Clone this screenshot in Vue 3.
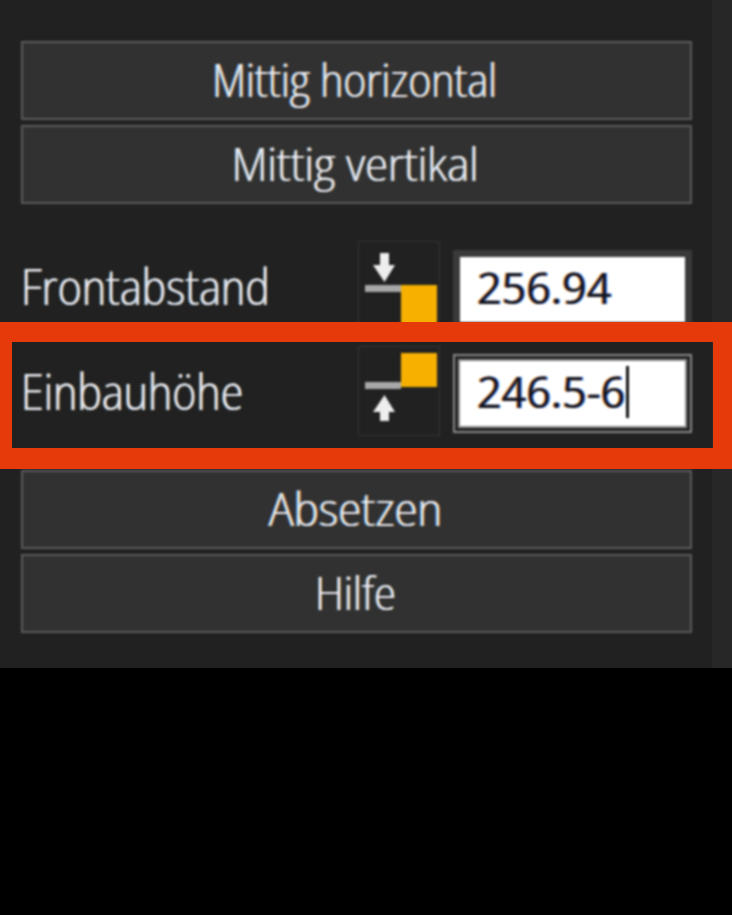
<script setup>
const topButtons = [
  { text: 'Mittig horizontal', scale: 0.85 },
  { text: 'Mittig vertikal', scale: 0.9 },
]
const bottomButtons = [
  { text: 'Absetzen', scale: 0.91 },
  { text: 'Hilfe', scale: 0.87 },
]
</script>

<template>
  <div class="page">
    <div class="panel">
      <div class="group">
        <div v-for="b in topButtons" :key="b.text" class="btn"><span class="btn-text" :style="{ transform: `scaleX(${b.scale})` }">{{ b.text }}</span></div>
      </div>
      <div class="rows">
        <div class="row">
          <div class="label"><span class="label-text">Frontabstand</span></div>
          <div class="iconbox">
            <svg width="80" height="88" viewBox="1 1 80 88">
              <path d="M22 12h9v12h6L26.500 41 15 24h7z" fill="#eee" />
              <rect x="7" y="44" width="36" height="7" fill="#a8a8a8" />
              <rect x="43" y="44" width="36" height="46" fill="#f6b000" />
            </svg>
          </div>
          <div class="field">
            <div class="value">256.94</div>
          </div>
        </div>
        <div class="row">
          <div class="label"><span class="label-text">Einbauhöhe</span></div>
          <div class="iconbox">
            <svg width="80" height="88" viewBox="1 1 80 88">
              <rect x="43" y="7" width="36" height="34" fill="#f6b000" />
              <rect x="7" y="36" width="36" height="7" fill="#a8a8a8" />
              <path d="M26.500 49 37 66h-6v9h-9v-9h-7z" fill="#eee" />
            </svg>
          </div>
          <div class="field focused">
            <div class="value">246.5-6<i class="caret"></i></div>
          </div>
        </div>
      </div>
      <div class="group">
        <div v-for="b in bottomButtons" :key="b.text" class="btn"><span class="btn-text" :style="{ transform: `scaleX(${b.scale})` }">{{ b.text }}</span></div>
      </div>
      <div class="highlight"></div>
    </div>
  </div>
</template>

<style>
html, body { margin: 0; background: #000; }
</style>

<style scoped>
.page {
  width: 732px;
  height: 915px;
  background: #000;
  overflow: hidden;
}
.panel {
  position: relative;
  box-sizing: border-box;
  width: 732px;
  height: 669px;
  padding: 41px 40px 0 21px;
  background: linear-gradient(90deg, #212121 0, #212121 712px, #272727 712px);
  border-top: 1px solid #8a8a8a;
  margin-top: -1px;
  font-family: "Open Sans", sans-serif;
}
.group {
  display: flex;
  flex-direction: column;
  gap: 5px;
  filter: blur(0.9px);
}
.btn {
  box-sizing: border-box;
  height: 79px;
  display: flex;
  align-items: center;
  justify-content: center;
  padding-right: 3px;
  background: #313131;
  border: 2px solid #5a5a5a;
  color: #eeeef4;
  white-space: nowrap;
}
.btn-text {
  display: inline-block;
  font-size: 46px;
  font-weight: 300;
  line-height: 60px;
  text-shadow: -1px 0 #5aa6e6, 1px 0 #e6a85a;
  margin-top: -4px;
}
.rows {
  display: flex;
  flex-direction: column;
  gap: 15px;
  margin: 37px 0 34px;
  filter: blur(0.9px);
}
.row {
  display: flex;
  align-items: center;
  height: 90px;
}
.label {
  width: 337px;
  color: #eeeef4;
  white-space: nowrap;
}
.label-text {
  display: inline-block;
  font-size: 49px;
  font-weight: 300;
  line-height: 60px;
  transform: scaleX(0.84);
  transform-origin: left center;
  text-shadow: -1px 0 #5aa6e6, 1px 0 #e6a85a;
}
.iconbox {
  box-sizing: border-box;
  width: 82px;
  height: 90px;
  border: 1px solid #363636;
  background: #212121;
  flex: none;
}
.iconbox svg { display: block; }
.field {
  box-sizing: border-box;
  width: 239px;
  height: 79px;
  margin-left: 13px;
  align-self: flex-end;
  margin-bottom: 2px;
  border: 7px solid #3a3a3a;
  background: #fff;
  background-clip: padding-box;
  flex: none;
  display: flex;
  align-items: center;
  padding: 0 0 4px 17px;
}
.field.focused {
  border: 7px double #8a8a8a;
  margin-bottom: 3px;
}
.value {
  color: #10131f;
  font-size: 43px;
  font-weight: 500;
  line-height: 60px;
  display: flex;
  align-items: center;
  text-shadow: -1px 0 #e69a50, 1px 0 #4a7ae0;
}
.caret {
  display: block;
  width: 3px;
  height: 52px;
  background: #111;
  margin-left: 1px;
}
.highlight {
  position: absolute;
  left: 0;
  top: 322px;
  box-sizing: border-box;
  width: 732px;
  height: 147px;
  border-style: solid;
  border-color: #e63a0a;
  border-width: 20px 19px 21px 12px;
}
</style>
